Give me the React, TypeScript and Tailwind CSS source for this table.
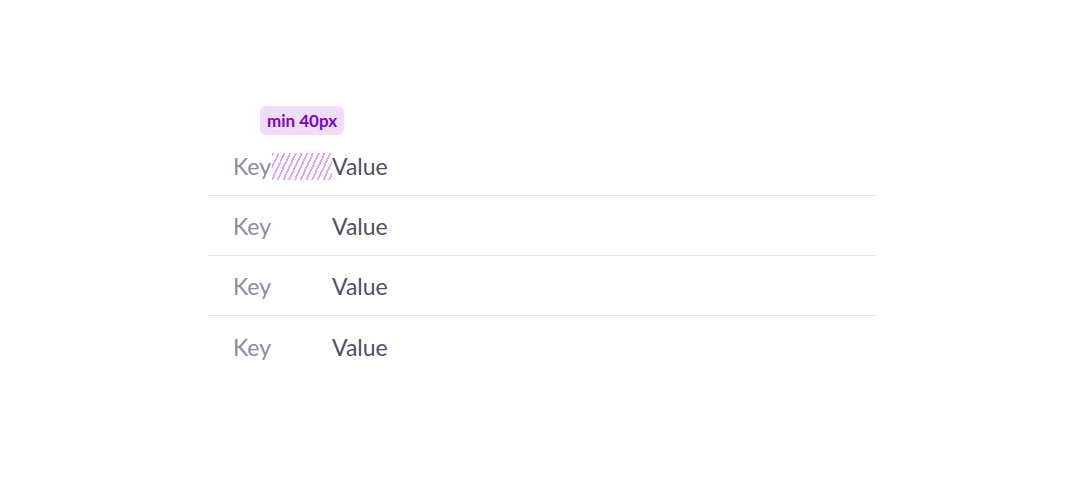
const rows = ['Value', 'Value', 'Value', 'Value']

export default function App() {
  return (
    <div className="min-h-screen w-full bg-white font-['Lato',sans-serif]">
      <div className="pl-[208px] pt-[136px]">
        <div className="w-[668px]">
          {rows.map((value, i) => (
            <div
              key={i}
              className={`flex h-[60px] items-center pl-[25px] pt-[2px] ${i < rows.length - 1 ? 'border-b border-[#e4e4ec]' : ''}`}
            >
              <span className="w-[39px] text-[23px] leading-none text-[#8b8ba3]">Key</span>
              {i === 0 ? (
                <span className="relative h-[27px] w-[60px] bg-[repeating-linear-gradient(115deg,#dba6f7_0px,#dba6f7_1.8px,transparent_1.8px,transparent_5.2px)]">
                  <span className="absolute left-1/2 top-[-47px] -translate-x-1/2 whitespace-nowrap rounded-md bg-[#f0ddf7] px-[7px] py-[3px] text-[17px] font-bold leading-[23px] text-[#7a06c6]">
                    min 40px
                  </span>
                </span>
              ) : (
                <span className="w-[60px]" />
              )}
              <span className="text-[23px] leading-none text-[#50505f]">{value}</span>
            </div>
          ))}
        </div>
      </div>
    </div>
  )
}
